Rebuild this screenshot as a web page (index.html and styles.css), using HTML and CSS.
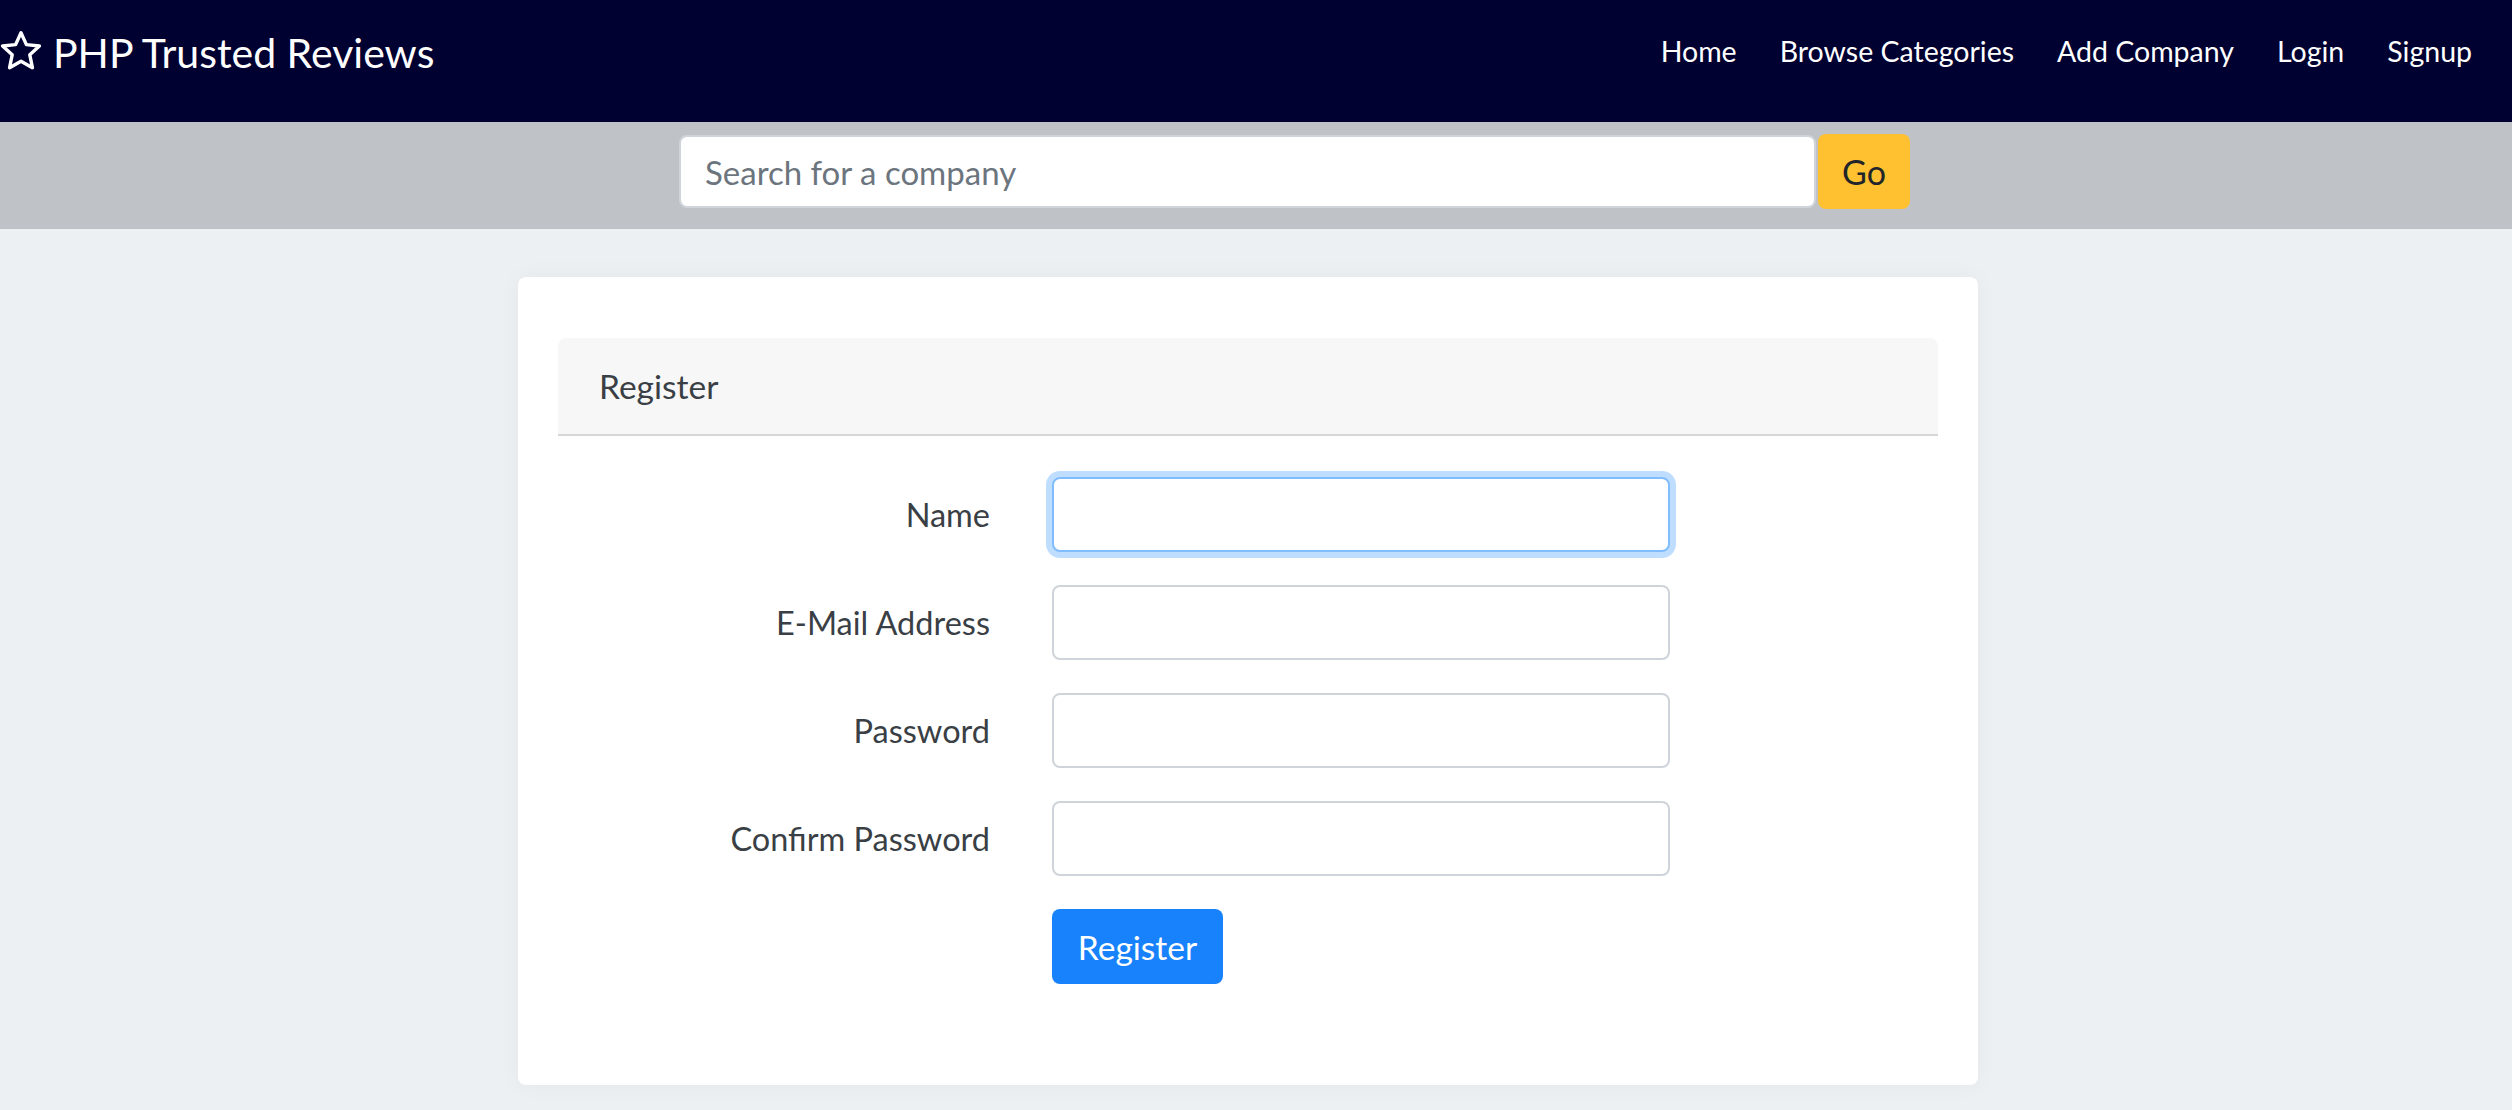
FILE: index.html
```html
<!DOCTYPE html>
<html lang="en">
<head>
    <meta charset="UTF-8">
    <meta name="viewport" content="width=device-width, initial-scale=1.0">
    <title>PHP Trusted Reviews - Register</title>
    <link rel="stylesheet" href="styles.css">
</head>
<body>
    <nav class="navbar">
        <a class="brand" href="#">
            <svg class="brand-star" width="42" height="39" viewBox="0 0 42 39">
                <polygon points="21,1.8 26.4,13.6 39.4,15 29.8,23.8 32.4,36.7 21,30.2 9.6,36.7 12.2,23.8 2.6,15 15.6,13.6" fill="none" stroke="#fff" stroke-width="3.4" stroke-linejoin="round"/>
            </svg>
            <span>PHP Trusted Reviews</span>
        </a>
        <ul class="nav-links">
            <li><a href="#">Home</a></li>
            <li><a href="#">Browse Categories</a></li>
            <li><a href="#">Add Company</a></li>
            <li><a href="#">Login</a></li>
            <li><a href="#">Signup</a></li>
        </ul>
    </nav>

    <div class="search-bar">
        <form class="search-group">
            <input type="text" class="search-input" placeholder="Search for a company">
            <button type="submit" class="btn-go">Go</button>
        </form>
    </div>

    <div class="page">
        <div class="card">
            <div class="card-header">Register</div>
            <form class="register-form">
                <label for="name">Name</label>
                <input type="text" id="name" class="form-control is-focused">

                <label for="email">E-Mail Address</label>
                <input type="email" id="email" class="form-control">

                <label for="password">Password</label>
                <input type="password" id="password" class="form-control">

                <label for="password-confirm">Confirm Password</label>
                <input type="password" id="password-confirm" class="form-control">

                <div class="form-actions">
                    <button type="submit" class="btn-primary">Register</button>
                </div>
            </form>
        </div>
    </div>
</body>
</html>
```

FILE: styles.css
```css
body {
    margin: 0;
    font-family: Lato, "Open Sans", sans-serif;
    background-color: #edf0f3;
    color: #3a3f45;
}

a {
    text-decoration: none;
}

/* Top navigation */
.navbar {
    display: flex;
    align-items: center;
    justify-content: space-between;
    height: 102px;
    padding: 0 40px 20px 0;
    background-color: #000031;
}

.brand {
    display: flex;
    align-items: center;
    gap: 11px;
    color: #fff;
    font-size: 41px;
    margin-top: 2px;
}

.brand-star {
    display: block;
    margin-top: -4px;
}

.nav-links {
    display: flex;
    gap: 43px;
    margin: 0;
    padding: 0;
    list-style: none;
}

.nav-links a {
    color: #fff;
    font-size: 28.5px;
}

/* Search strip */
.search-bar {
    height: 95px;
    display: flex;
    align-items: flex-start;
    padding: 12px 0 0 679px;
    background-color: #bfc3c7;
}

.search-group {
    display: flex;
    align-items: center;
    gap: 2px;
}

.search-input {
    width: 1137px;
    height: 73px;
    box-sizing: border-box;
    padding: 0 24px;
    border: 2px solid #ced4da;
    border-radius: 8px;
    font-family: inherit;
    font-size: 33px;
    color: #495057;
    background: #fff;
}

.search-input::placeholder {
    color: #6c757d;
}

.btn-go {
    width: 92px;
    height: 75px;
    border: none;
    border-radius: 8px;
    background-color: #ffc130;
    color: #212529;
    font-family: inherit;
    font-size: 34px;
    cursor: pointer;
}

/* Register card */
.page {
    width: 1460px;
    margin: 48px 0 26px 518px;
}

.card {
    padding: 61px 40px 101px;
    background-color: #fff;
    border-radius: 8px;
    box-shadow: 0 0 24px rgba(0, 0, 0, 0.04);
}

.card-header {
    height: 96px;
    display: flex;
    align-items: center;
    padding-left: 41px;
    font-size: 33.5px;
    background-color: #f7f7f7;
    border-bottom: 2px solid #d6d6d6;
    border-radius: 8px 8px 0 0;
}

.register-form {
    display: grid;
    grid-template-columns: 432px 618px;
    column-gap: 62px;
    row-gap: 33px;
    align-items: center;
    margin-top: 41px;
}

.register-form label {
    text-align: right;
    font-size: 32.5px;
}

.form-control {
    height: 75px;
    box-sizing: border-box;
    border: 2px solid #ced4da;
    border-radius: 8px;
    font-family: inherit;
    font-size: 32px;
    padding: 0 24px;
    background: #fff;
}

.form-control.is-focused {
    border-color: #80bdff;
    box-shadow: 0 0 0 6px rgba(0, 123, 255, 0.25);
    outline: none;
}

.form-actions {
    grid-column: 2;
}

.btn-primary {
    width: 171px;
    height: 75px;
    padding: 0;
    border: none;
    border-radius: 8px;
    background-color: #1782fb;
    color: #fff;
    font-family: inherit;
    font-size: 33.5px;
    cursor: pointer;
}
```
